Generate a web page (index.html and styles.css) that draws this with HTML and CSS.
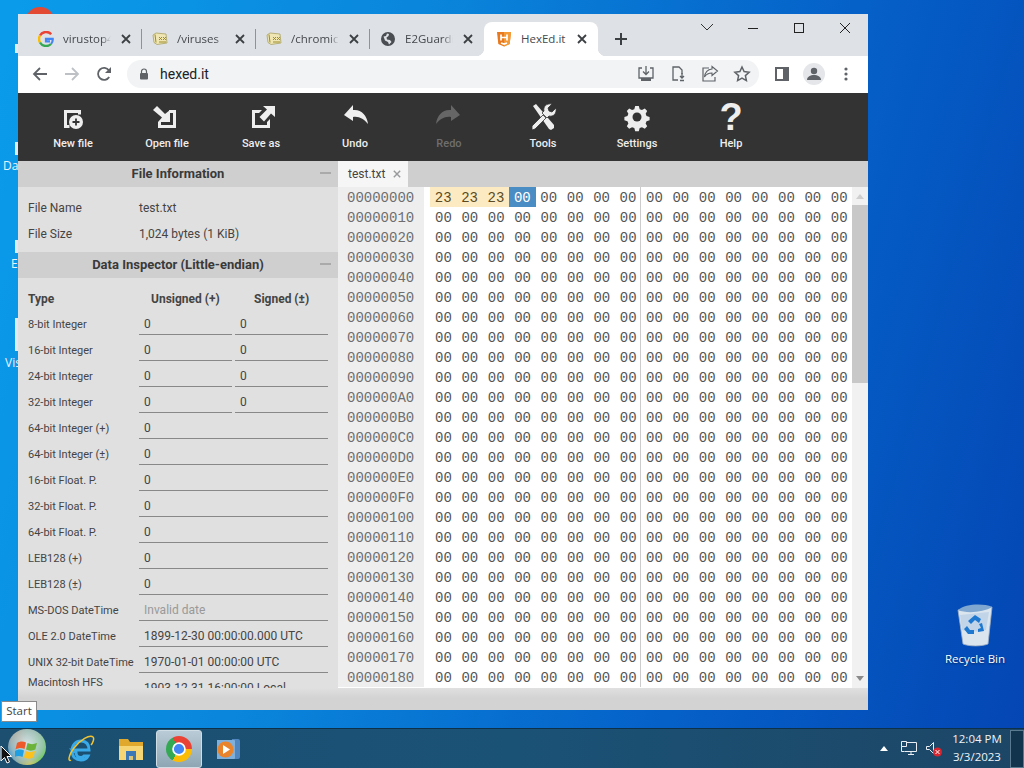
FILE: index.html
```html
<!DOCTYPE html>
<html lang="en">
<head>
<meta charset="utf-8">
<title>HexEd.it</title>
<link rel="stylesheet" href="styles.css">
</head>
<body>
<svg class="defs" width="0" height="0" aria-hidden="true">
  <symbol id="x" viewBox="0 0 10 10"><path d="M1 1l8 8M9 1l-8 8" fill="none" stroke="#3c4043" stroke-width="1.8"/></symbol>
  <symbol id="globe-fav" viewBox="0 0 16 16"><path d="M8 1a7 7 0 1 0 0 14A7 7 0 0 0 8 1zM3.500 5.500L6 5l1-2.500 2 .5-.5 2-2 1.500L7 8.500l3 .500 1.500 2L9 13.500 8 11 5 9.500z" fill="#4a4d52" fill-rule="evenodd"/></symbol>
  <symbol id="folder-fav" viewBox="0 0 16 16"><path d="M1 4l3-2 10 1 1 9-10 1.500-3-2z" fill="#efe6b4" stroke="#a9a262" stroke-width=".8"/><path d="M3 3.500l1 8M7 6l3 3M10 6L7 9M11 6l3 3M14 6l-3 3M7 11h7" fill="none" stroke="#9c8c2a" stroke-width="1"/></symbol>
</svg>

<main class="desktop">
  <div class="peek-icon peek-chrome"></div>
  <div class="peek-bit peek-bit-a"></div>
  <div class="peek-bit peek-bit-b"></div>
  <div class="peek-bit peek-bit-c"></div>
  <div class="peek-bit peek-bit-d"></div>
  <span class="peek-label peek-da">Da</span>
  <span class="peek-label peek-e">E</span>
  <span class="peek-label peek-vis">Vis</span>

  <div class="bin">
    <svg class="bin-icon" width="38" height="44" viewBox="0 0 38 44">
      <path d="M2 7l34-3-4 37c-6 2.500-19 2.500-25 0z" fill="#dbe5ee" stroke="#9fb0c2" stroke-width=".8"/>
      <path d="M2 7C9 1 27 0 36 4c-8 5-25 7-34 3z" fill="#7fa7d0"/>
      <path d="M4 12l29-3-3 18c-8 2-18 2-24 0z" fill="#b9cfe6" opacity=".75"/>
      <path d="M19 12l6 4-2 4-4-3-4 4-3-3zM26 20l2 8-6 1v-3l3-1-2-4zM11 23l3 4 4 0v4h-6l-4-5z" fill="#1f78cf"/>
    </svg>
    <span class="bin-label">Recycle Bin</span>
  </div>

  <section class="window">
    <header class="tabstrip">
      <div class="tab">
        <svg class="fav" width="16" height="16" viewBox="0 0 16 16">
          <path d="M13.200 3.200A7 7 0 0 0 2 4.500" fill="none" stroke="#ea4335" stroke-width="2.400"/>
          <path d="M2 4.500a7 7 0 0 0 0 7" fill="none" stroke="#fbbc05" stroke-width="2.400"/>
          <path d="M2 11.500a7 7 0 0 0 11 1.500" fill="none" stroke="#34a853" stroke-width="2.400"/>
          <path d="M13 13c1.200-1.200 1.900-3 1.700-5.200H8v2.500h4" fill="none" stroke="#4285f4" stroke-width="2.200"/>
        </svg>
        <span class="tab-title">virustop4</span>
        <svg class="tab-x" width="10" height="10"><use href="#x"/></svg>
      </div>
      <div class="tab">
        <svg class="fav" width="16" height="16"><use href="#folder-fav"/></svg>
        <span class="tab-title">/viruses</span>
        <svg class="tab-x" width="10" height="10"><use href="#x"/></svg>
      </div>
      <div class="tab">
        <svg class="fav" width="16" height="16"><use href="#folder-fav"/></svg>
        <span class="tab-title">/chromic</span>
        <svg class="tab-x" width="10" height="10"><use href="#x"/></svg>
      </div>
      <div class="tab tab-last">
        <svg class="fav" width="16" height="16"><use href="#globe-fav"/></svg>
        <span class="tab-title">E2Guardi</span>
        <svg class="tab-x" width="10" height="10"><use href="#x"/></svg>
      </div>
      <div class="tab tab-active">
        <svg class="fav" width="16" height="16" viewBox="0 0 16 16">
          <path d="M1 1h14l-1.300 12L8 15.500 2.300 13z" fill="#e8791f"/>
          <path d="M8 1h7l-1.300 12L8 15.500z" fill="#f39a37"/>
          <path d="M5 3.500v6M11 3.500v6M5 6.500h6M5 12l3 1 3-1" fill="none" stroke="#fff" stroke-width="1.700"/>
        </svg>
        <span class="tab-title">HexEd.it</span>
        <svg class="tab-x" width="10" height="10"><use href="#x"/></svg>
      </div>
      <svg class="newtab" width="14" height="14" viewBox="0 0 14 14"><path d="M7 1v12M1 7h12" stroke="#3c4043" stroke-width="2"/></svg>
      <div class="winctl">
        <svg class="winbtn" width="46" height="16" viewBox="0 0 46 16"><path d="M17 4l6 6 6-6" fill="none" stroke="#333" stroke-width="1"/></svg>
        <svg class="winbtn" width="46" height="16" viewBox="0 0 46 16"><path d="M18 8.500h10" stroke="#222" stroke-width="1"/></svg>
        <svg class="winbtn" width="46" height="16" viewBox="0 0 46 16"><rect x="18.500" y="3.500" width="9" height="9" fill="none" stroke="#222" stroke-width="1"/></svg>
        <svg class="winbtn" width="46" height="16" viewBox="0 0 46 16"><path d="M18 3l10 10M28 3L18 13" stroke="#222" stroke-width="1"/></svg>
      </div>
    </header>

    <nav class="navbar">
      <svg class="nav-ico" width="16" height="16" viewBox="0 0 16 16"><path d="M15 8H2M8 2L2 8l6 6" fill="none" stroke="#5f6368" stroke-width="1.800"/></svg>
      <svg class="nav-ico" width="16" height="16" viewBox="0 0 16 16"><path d="M1 8h13M8 2l6 6-6 6" fill="none" stroke="#bdc1c6" stroke-width="1.800"/></svg>
      <svg class="nav-ico" width="16" height="16" viewBox="0 0 16 16"><path d="M13.200 11A6 6 0 1 1 13 4.500" fill="none" stroke="#5f6368" stroke-width="1.800"/><path d="M15 1v6H9z" fill="#5f6368"/></svg>
      <div class="omnibox">
        <svg class="lock" width="10" height="12" viewBox="0 0 10 12"><path d="M2.500 5V3.500a2.500 2.500 0 0 1 5 0V5" fill="none" stroke="#5f6368" stroke-width="1.200"/><rect x="1" y="5" width="8" height="6.500" rx="1" fill="#5f6368"/></svg>
        <span class="url">hexed.it</span>
        <svg class="omni-ico" width="18" height="18" viewBox="0 0 18 18"><path d="M5 3H2v10h14V3h-3M9 1v8M6 6.500L9 9.500 12 6.500" fill="none" stroke="#5f6368" stroke-width="1.300"/><path d="M4 13h10v3H4z" fill="#5f6368"/></svg>
        <svg class="omni-ico" width="18" height="18" viewBox="0 0 18 18"><path d="M9 15H4V2h6l3 3v4" fill="none" stroke="#5f6368" stroke-width="1.300"/><path d="M13 8v5M11 11l2 2 2-2M11 15.500h4" fill="none" stroke="#5f6368" stroke-width="1.300"/></svg>
        <svg class="omni-ico" width="18" height="18" viewBox="0 0 18 18"><path d="M11 1.500l5.500 4.500L11 10.500V8C7 8 5 9.500 3.500 12 4 7.500 6.500 4.500 11 4z" fill="none" stroke="#5f6368" stroke-width="1.100"/><path d="M8 3H2v13h12v-4" fill="none" stroke="#5f6368" stroke-width="1.200"/></svg>
        <svg class="omni-ico" width="18" height="18" viewBox="0 0 18 18"><path d="M9 2l2.100 4.600 5 .6-3.700 3.400 1 5L9 13.100l-4.400 2.500 1-5L1.900 7.200l5-.6z" fill="none" stroke="#5f6368" stroke-width="1.500"/></svg>
      </div>
      <svg class="panel-ico" width="14" height="14" viewBox="0 0 14 14"><path d="M0 0h14v14H0z" fill="#5f6368"/><path d="M2 2h6v10H2z" fill="#fff"/></svg>
      <div class="avatar"><svg width="14" height="14" viewBox="0 0 14 14"><circle cx="7" cy="4" r="3.200" fill="#5f6368"/><path d="M0 13c0-3.500 3.500-5 7-5s7 1.500 7 5z" fill="#5f6368"/></svg></div>
      <svg class="menu-ico" width="4" height="14" viewBox="0 0 4 14"><circle cx="2" cy="2" r="1.600" fill="#5f6368"/><circle cx="2" cy="7" r="1.600" fill="#5f6368"/><circle cx="2" cy="12" r="1.600" fill="#5f6368"/></svg>
    </nav>

    <div class="toolbar">
      <div class="tool">
        <svg class="tool-ico" width="36" height="32" viewBox="0 0 36 32"><path d="M9 9h17v4.500h-3V12H12v12h2.500v3H9z" fill="#eee"/><circle cx="21" cy="21" r="7" fill="#eee"/><path d="M21 17.500v7M17.500 21h7" stroke="#333" stroke-width="1.800"/></svg>
        <span>New file</span>
      </div>
      <div class="tool">
        <svg class="tool-ico" width="36" height="32" viewBox="0 0 36 32"><path d="M4 9l4-4 8 8 5-4v12H9l4-4.500z" fill="#eee"/><path d="M20 9h7v18H9v-6h3v3h12V12h-4z" fill="#eee"/></svg>
        <span>Open file</span>
      </div>
      <div class="tool">
        <svg class="tool-ico" width="36" height="32" viewBox="0 0 36 32"><path d="M9 9h10l-3 3h-4v12h12v-3l3-3v9H9z" fill="#eee"/><path d="M32 5v11l-4-3.500-7 8-4.500-4.500 7.500-7.500L20 5z" fill="#eee"/></svg>
        <span>Save as</span>
      </div>
      <div class="tool">
        <svg class="tool-ico" width="36" height="32" viewBox="0 0 36 32"><path d="M7 14l9-10v5c8-1 14 5 15 14-4-5-9-8-15-7v4z" fill="#eee"/></svg>
        <span>Undo</span>
      </div>
      <div class="tool tool-off">
        <svg class="tool-ico" width="36" height="32" viewBox="0 0 36 32"><path d="M29 14l-9-10v5C12 8 6 14 5 23c4-5 9-8 15-7v4z" fill="#666"/></svg>
        <span>Redo</span>
      </div>
      <div class="tool">
        <svg class="tool-ico" width="36" height="32" viewBox="0 0 36 32"><path d="M8 5l3-2 18 21 0 3-3 2-2-1z" fill="#eee"/><path d="M7 25l11-11 3 3-11 11-3 1zM19 10c-1-4 2-8 8-7l-4 4 1 3 3 1 4-4c1 6-3 9-7 8l-2 2-5-5z" fill="#eee" stroke="#333" stroke-width=".8"/></svg>
        <span>Tools</span>
      </div>
      <div class="tool">
        <svg class="tool-ico" width="36" height="32" viewBox="0 0 36 32"><path d="M16 4h4l1 3.500 2.500 1 3.200-1.700 2.600 2.700-1.700 3.100 1 2.500 3.400 1v3.800l-3.400 1-1 2.500 1.700 3.100-2.600 2.700-3.200-1.700-2.500 1-1 3.500h-4l-1-3.500-2.500-1-3.200 1.700-2.600-2.700 1.700-3.100-1-2.500-3.400-1v-3.800l3.400-1 1-2.500-1.700-3.100 2.600-2.700 3.200 1.700 2.500-1z" fill="#eee" transform="translate(1.800 1.400) scale(.9)"/><circle cx="18" cy="16" r="4.500" fill="#333"/></svg>
        <span>Settings</span>
      </div>
      <div class="tool">
        <span class="help-mark">?</span>
        <span>Help</span>
      </div>
    </div>

    <div class="workspace">
      <aside class="sidebar">
        <h2 class="section-head">File Information<i class="collapse"></i></h2>
        <dl class="file-info">
          <div class="info-row"><dt>File Name</dt><dd>test.txt</dd></div>
          <div class="info-row"><dt>File Size</dt><dd>1,024 bytes (1 KiB)</dd></div>
        </dl>
        <h2 class="section-head">Data Inspector (Little-endian)<i class="collapse"></i></h2>
        <div class="inspector">
          <div class="ins-head"><span>Type</span><span>Unsigned (+)</span><span>Signed (±)</span></div>
          <div class="ins-row"><span class="ins-label">8-bit Integer</span><span class="field">0</span><span class="field">0</span></div>
          <div class="ins-row"><span class="ins-label">16-bit Integer</span><span class="field">0</span><span class="field">0</span></div>
          <div class="ins-row"><span class="ins-label">24-bit Integer</span><span class="field">0</span><span class="field">0</span></div>
          <div class="ins-row"><span class="ins-label">32-bit Integer</span><span class="field">0</span><span class="field">0</span></div>
          <div class="ins-row"><span class="ins-label">64-bit Integer (+)</span><span class="field wide">0</span></div>
          <div class="ins-row"><span class="ins-label">64-bit Integer (±)</span><span class="field wide">0</span></div>
          <div class="ins-row"><span class="ins-label">16-bit Float. P.</span><span class="field wide">0</span></div>
          <div class="ins-row"><span class="ins-label">32-bit Float. P.</span><span class="field wide">0</span></div>
          <div class="ins-row"><span class="ins-label">64-bit Float. P.</span><span class="field wide">0</span></div>
          <div class="ins-row"><span class="ins-label">LEB128 (+)</span><span class="field wide">0</span></div>
          <div class="ins-row"><span class="ins-label">LEB128 (±)</span><span class="field wide">0</span></div>
          <div class="ins-row"><span class="ins-label">MS-DOS DateTime</span><span class="field wide muted">Invalid date</span></div>
          <div class="ins-row"><span class="ins-label">OLE 2.0 DateTime</span><span class="field wide">1899-12-30 00:00:00.000 UTC</span></div>
          <div class="ins-row"><span class="ins-label">UNIX 32-bit DateTime</span><span class="field wide">1970-01-01 00:00:00 UTC</span></div>
          <div class="ins-row"><span class="ins-label">Macintosh HFS DateTime</span><span class="field wide">1903-12-31 16:00:00 Local</span></div>
        </div>
      </aside>

      <div class="editor">
        <div class="file-tabs">
          <div class="file-tab">test.txt<svg class="file-x" width="8" height="8"><use href="#x"/></svg></div>
        </div>
        <div class="hex-wrap">
          <div class="hex">
            <div class="hex-row"><span class="off">00000000</span><span class="grp grp-cells"><span class="cell mark">23</span><span class="cell mark">23</span><span class="cell mark">23</span><span class="cell sel">00</span><span class="cell">00</span><span class="cell">00</span><span class="cell">00</span><span class="cell">00</span></span><span class="grp">00 00 00 00 00 00 00 00</span></div>
            <div class="hex-row"><span class="off">00000010</span><span class="grp">00 00 00 00 00 00 00 00</span><span class="grp">00 00 00 00 00 00 00 00</span></div>
            <div class="hex-row"><span class="off">00000020</span><span class="grp">00 00 00 00 00 00 00 00</span><span class="grp">00 00 00 00 00 00 00 00</span></div>
            <div class="hex-row"><span class="off">00000030</span><span class="grp">00 00 00 00 00 00 00 00</span><span class="grp">00 00 00 00 00 00 00 00</span></div>
            <div class="hex-row"><span class="off">00000040</span><span class="grp">00 00 00 00 00 00 00 00</span><span class="grp">00 00 00 00 00 00 00 00</span></div>
            <div class="hex-row"><span class="off">00000050</span><span class="grp">00 00 00 00 00 00 00 00</span><span class="grp">00 00 00 00 00 00 00 00</span></div>
            <div class="hex-row"><span class="off">00000060</span><span class="grp">00 00 00 00 00 00 00 00</span><span class="grp">00 00 00 00 00 00 00 00</span></div>
            <div class="hex-row"><span class="off">00000070</span><span class="grp">00 00 00 00 00 00 00 00</span><span class="grp">00 00 00 00 00 00 00 00</span></div>
            <div class="hex-row"><span class="off">00000080</span><span class="grp">00 00 00 00 00 00 00 00</span><span class="grp">00 00 00 00 00 00 00 00</span></div>
            <div class="hex-row"><span class="off">00000090</span><span class="grp">00 00 00 00 00 00 00 00</span><span class="grp">00 00 00 00 00 00 00 00</span></div>
            <div class="hex-row"><span class="off">000000A0</span><span class="grp">00 00 00 00 00 00 00 00</span><span class="grp">00 00 00 00 00 00 00 00</span></div>
            <div class="hex-row"><span class="off">000000B0</span><span class="grp">00 00 00 00 00 00 00 00</span><span class="grp">00 00 00 00 00 00 00 00</span></div>
            <div class="hex-row"><span class="off">000000C0</span><span class="grp">00 00 00 00 00 00 00 00</span><span class="grp">00 00 00 00 00 00 00 00</span></div>
            <div class="hex-row"><span class="off">000000D0</span><span class="grp">00 00 00 00 00 00 00 00</span><span class="grp">00 00 00 00 00 00 00 00</span></div>
            <div class="hex-row"><span class="off">000000E0</span><span class="grp">00 00 00 00 00 00 00 00</span><span class="grp">00 00 00 00 00 00 00 00</span></div>
            <div class="hex-row"><span class="off">000000F0</span><span class="grp">00 00 00 00 00 00 00 00</span><span class="grp">00 00 00 00 00 00 00 00</span></div>
            <div class="hex-row"><span class="off">00000100</span><span class="grp">00 00 00 00 00 00 00 00</span><span class="grp">00 00 00 00 00 00 00 00</span></div>
            <div class="hex-row"><span class="off">00000110</span><span class="grp">00 00 00 00 00 00 00 00</span><span class="grp">00 00 00 00 00 00 00 00</span></div>
            <div class="hex-row"><span class="off">00000120</span><span class="grp">00 00 00 00 00 00 00 00</span><span class="grp">00 00 00 00 00 00 00 00</span></div>
            <div class="hex-row"><span class="off">00000130</span><span class="grp">00 00 00 00 00 00 00 00</span><span class="grp">00 00 00 00 00 00 00 00</span></div>
            <div class="hex-row"><span class="off">00000140</span><span class="grp">00 00 00 00 00 00 00 00</span><span class="grp">00 00 00 00 00 00 00 00</span></div>
            <div class="hex-row"><span class="off">00000150</span><span class="grp">00 00 00 00 00 00 00 00</span><span class="grp">00 00 00 00 00 00 00 00</span></div>
            <div class="hex-row"><span class="off">00000160</span><span class="grp">00 00 00 00 00 00 00 00</span><span class="grp">00 00 00 00 00 00 00 00</span></div>
            <div class="hex-row"><span class="off">00000170</span><span class="grp">00 00 00 00 00 00 00 00</span><span class="grp">00 00 00 00 00 00 00 00</span></div>
            <div class="hex-row"><span class="off">00000180</span><span class="grp">00 00 00 00 00 00 00 00</span><span class="grp">00 00 00 00 00 00 00 00</span></div>
          </div>
          <div class="scrollbar">
            <i class="arrow-up"></i>
            <div class="thumb"></div>
            <i class="arrow-down"></i>
          </div>
        </div>
      </div>
    </div>
    <div class="statusbar"></div>
  </section>

  <div class="tooltip">Start</div>
</main>

<footer class="taskbar">
  <div class="orb">
    <svg width="24" height="24" viewBox="0 0 24 24">
      <path d="M2 5c3-2 6-2 9-.500L9.500 11c-3-1.500-6-1.500-9 .5z" fill="#ef5a2a"/>
      <path d="M12.500 5c3 1.500 6 1.500 9.500 0l-1.700 6.500c-3 1.500-6 1.500-9.300 0z" fill="#6cb33a"/>
      <path d="M0 13c3-2 6-2 9-.5L7.500 19c-3-1.500-6-1.500-9 .5z" fill="#1fa0e3"/>
      <path d="M10.500 13c3 1.500 6 1.500 9.500 0L18.500 19.500c-3 1.500-6 1.500-9.500 0z" fill="#fcc11b"/>
    </svg>
  </div>
  <div class="task-btn">
    <svg width="30" height="30" viewBox="0 0 30 30">
      <path d="M7 16h16c0-6-3-9-8-9s-9 4-9 10 4 9 9 9c4 0 6-2 7-4h-4c-1 1-2 1.500-3 1.500-3 0-5-2-5-5z" fill="none" stroke="#39a9e8" stroke-width="3"/>
      <path d="M5 26C2 28 2 22 8 14 14 6 24 0 27 3c1.500 1.500 0 6-2 8" fill="none" stroke="#f4c430" stroke-width="1.500"/>
    </svg>
  </div>
  <div class="task-btn">
    <svg width="26" height="24" viewBox="0 0 26 24">
      <path d="M1 2h9l2 3h13v18H1z" fill="#e0a92e"/>
      <path d="M1 9h24v14H1z" fill="#f6d575"/>
      <path d="M8 14h10v9H8z" fill="#3b78b5"/>
      <path d="M11 19h4v4h-4z" fill="#d9c27a"/>
    </svg>
  </div>
  <div class="task-btn task-active"><div class="chrome-logo"><span class="chrome-dot"></span></div></div>
  <div class="task-btn task-small">
    <svg width="26" height="24" viewBox="0 0 26 24">
      <path d="M17 2h6a2 2 0 0 1 2 2v16a2 2 0 0 1-2 2h-6z" fill="#4f86c0"/>
      <path d="M2 3h17a1 1 0 0 1 1 1v17a1 1 0 0 1-1 1H2z" fill="#7fb0dc"/>
      <circle cx="10.500" cy="12.500" r="8" fill="#e9842c"/>
      <path d="M8 8l7 4.500L8 17z" fill="#fff"/>
    </svg>
  </div>
  <div class="tray">
    <i class="tray-up"></i>
    <svg class="tray-net" width="16" height="15" viewBox="0 0 16 15"><path d="M3.500 1.500h12v9h-12M7 13.500h6M10 10.500v3" fill="none" stroke="#e8eef3" stroke-width="1"/><path d="M.5.500h5v5h-5zM.5 5.500v5h3" fill="#1c4a68" stroke="#e8eef3" stroke-width="1"/></svg>
    <svg class="tray-snd" width="18" height="16" viewBox="0 0 18 16"><path d="M1.500 5.500h3l4-4v11l-4-4h-3z" fill="none" stroke="#e8eef3" stroke-width="1"/><circle cx="12.500" cy="11" r="4.500" fill="#d8252f"/><path d="M10.500 9l4 4M14.500 9l-4 4" stroke="#fff" stroke-width="1"/></svg>
    <div class="clock"><span>12:04 PM</span><span>3/3/2023</span></div>
    <div class="show-desktop"></div>
  </div>
</footer>

<svg class="cursor" width="12" height="20" viewBox="0 0 12 20"><path d="M1 1v15l3.500-3.500L7 18l2.500-1-2.500-5.500h4.500z" fill="#111" stroke="#fff" stroke-width="1"/></svg>
</body>
</html>
```

FILE: styles.css
```css
* { box-sizing: border-box; }
html, body { margin: 0; height: 100%; }
body {
  width: 1024px;
  height: 768px;
  overflow: hidden;
  display: flex;
  flex-direction: column;
  font-family: "Roboto", "Liberation Sans", sans-serif;
  position: relative;
}
.defs { position: absolute; }

/* desktop */
.desktop {
  position: relative;
  flex: 1;
  background: linear-gradient(105deg, #0a9ceb 0%, #0a86dc 35%, #0561c8 70%, #0446b4 100%);
}
.peek-chrome {
  position: absolute; left: 25px; top: 7px; width: 30px; height: 30px; border-radius: 50%;
  background: #e24a33;
}
.peek-bit { position: absolute; left: 15px; width: 3px; background: #dfeaf5; }
.peek-bit-a { top: 44px; height: 9px; }
.peek-bit-b { top: 142px; height: 13px; }
.peek-bit-c { top: 240px; height: 13px; }
.peek-bit-d { top: 318px; height: 33px; }
.peek-label {
  position: absolute; color: #e8f4ff; font: 12px "Open Sans", sans-serif;
}
.peek-da { left: 3px; top: 157px; }
.peek-e { left: 11px; top: 255px; }
.peek-vis { left: 5px; top: 354px; }

.bin {
  position: absolute; left: 940px; top: 603px; width: 70px;
  display: flex; flex-direction: column; align-items: center; gap: 4px;
}
.bin-label { color: #fff; font: 11.5px "Open Sans", sans-serif; white-space: nowrap; text-shadow: 0 1px 2px rgba(0,0,0,.5); }

.tooltip {
  position: absolute; left: 1px; top: 701px; width: 36px; height: 21px;
  background: #fff; border: 1px solid #8a8a8a;
  color: #444; font: 11.5px "Open Sans", sans-serif; text-align: center; line-height: 18px;
}

/* window */
.window {
  position: absolute; left: 18px; top: 14px; width: 850px; height: 696px;
  display: flex; flex-direction: column; background: #d3d3d3;
}
.tabstrip {
  height: 42px; background: #dee1e6; flex: none;
  display: flex; align-items: flex-end; padding-left: 10px; position: relative;
}
.tab {
  width: 114px; height: 34px; display: flex; align-items: center;
  padding: 0 11px 0 10px; position: relative;
}
.tab::after {
  content: ""; position: absolute; right: 0; top: 7px; width: 1px; height: 20px; background: #8f9296;
}
.tab-last::after, .tab-active::after { content: none; }
.tab-active {
  background: #fff; border-radius: 8px 8px 0 0; padding-left: 12px; padding-right: 11px;
}
.tab-active::before, .tab-active::after {
  content: ""; position: absolute; bottom: 0; top: auto; width: 8px; height: 8px; background: transparent;
}
.tab-active::before { left: -8px; background: radial-gradient(circle at 0 0, #dee1e6 8px, #fff 8.5px); }
.tab-active::after { content: ""; right: -8px; background: radial-gradient(circle at 100% 0, #dee1e6 8px, #fff 8.5px); }
.tab-title {
  flex: 1; min-width: 0; margin: 0 10px 1px 9px; overflow: hidden; white-space: nowrap;
  font: 11.5px "Open Sans", sans-serif; color: #45484c;
  -webkit-mask-image: linear-gradient(90deg, #000 80%, transparent 100%);
  mask-image: linear-gradient(90deg, #000 80%, transparent 100%);
}
.tab-active .tab-title { -webkit-mask-image: none; mask-image: none; }
.fav, .tab-x { flex: none; }
.newtab { margin: 0 0 10px 16px; }
.winctl { margin-left: 56px; align-self: flex-start; padding-top: 6px; display: flex; }

.navbar {
  height: 37px; background: #fff; display: flex; align-items: flex-start; padding-left: 14px; flex: none;
}
.nav-ico { margin: 10px 16px 0 0; flex: none; }
.omnibox {
  width: 632px; height: 28px; margin: 4px 0 0 -1px; background: #f1f3f4; border-radius: 14px;
  display: flex; align-items: center; padding-left: 12px;
}
.lock { flex: none; }
.url { flex: 1; margin-left: 11px; font: 14px "Roboto", sans-serif; color: #202124; }
.omni-ico { margin-right: 14px; flex: none; }
.omni-ico:last-child { margin-right: 8px; }
.panel-ico { margin: 11px 0 0 16px; flex: none; }
.avatar {
  width: 22px; height: 22px; border-radius: 50%; background: #e4e6ea; flex: none;
  margin: 7px 0 0 14px; display: flex; align-items: center; justify-content: center;
}
.menu-ico { margin: 11px 0 0 19px; flex: none; }

/* app toolbar */
.toolbar {
  height: 68px; background: #333; display: flex; padding-left: 8px; flex: none;
}
.tool {
  width: 94px; display: flex; flex-direction: column; align-items: center;
  color: #eee; font-size: 11px; font-weight: 500; line-height: 14px; padding-top: 8px;
}
.tool-ico { height: 32px; flex: none; margin-bottom: 4px; }
.tool-off { color: #6e6e6e; }
.help-mark {
  height: 32px; margin-bottom: 4px; font: 700 38px/32px "Liberation Sans", sans-serif; color: #eee;
}

/* workspace */
.workspace { height: 527px; display: flex; background: #e0e0e0; flex: none; }
.sidebar { width: 320px; height: 527px; overflow: hidden; flex: none; }
.section-head {
  position: relative; margin: 0; height: 26px; background: #cfcfcf;
  font-size: 13px; font-weight: 700; line-height: 25px; text-align: center; color: #3a3a3a;
}
.collapse { position: absolute; right: 7px; top: 11px; width: 11px; height: 2px; background: #aaa; }
.file-info { margin: 0; padding: 7px 0 6px 10px; }
.info-row { height: 26px; padding-top: 2px; display: flex; align-items: center; font-size: 12px; color: #444; }
.info-row dt { width: 111px; }
.info-row dd { margin: 0; }
.inspector { padding: 7px 10px 0; }
.ins-head { height: 26px; padding-top: 2px; display: grid; grid-template-columns: 111px 96px 93px; align-items: center; font-size: 12px; font-weight: 700; color: #444; }
.ins-head span:nth-child(2) { padding-left: 12px; }
.ins-head span:nth-child(3) { padding-left: 19px; white-space: nowrap; }
.ins-row { height: 26px; display: grid; grid-template-columns: 108px 93px 93px; column-gap: 3px; align-items: start; }
.ins-label { font-size: 11px; line-height: 13px; color: #444; padding-top: 7px; width: 108px; }
.field {
  height: 24px; border-bottom: 1px solid #888; padding-left: 5px;
  font-size: 12px; line-height: 26px; color: #444; white-space: nowrap; overflow: hidden;
}
.wide { grid-column: 2 / 4; }
.muted { color: #999; }
.ins-row:last-child .ins-label { padding-top: 1px; }
.ins-row:nth-last-child(2) .ins-label { white-space: nowrap; }

.editor { flex: 1; display: flex; flex-direction: column; }
.file-tabs { height: 26px; background: #cfcfcf; flex: none; }
.file-tab {
  width: 70px; height: 26px; background: #f6f6f6; font-size: 12px; color: #444;
  display: flex; align-items: center; padding-left: 10px; gap: 8px;
}
.file-x { opacity: .5; }
.hex-wrap { height: 501px; display: flex; background: #fff; }
.hex { width: 514px; font: 14px/22px "Liberation Mono", monospace; color: #555; }
.hex-row { height: 20px; display: flex; white-space: pre; }
.off { width: 86px; height: 20px; flex: none; background: #eee; color: #6e6e6e; padding-left: 9px; }
.grp { width: 211px; height: 20px; flex: none; padding-left: 5px; word-spacing: 1.2px; }
.grp + .grp { border-left: 1px solid #ccc; margin-left: -1px; width: 212px; }
.hex-row .off + .grp { margin-left: 6px; }
.grp-cells { display: flex; padding-left: 0; }
.cell { width: 26.4px; height: 20px; text-align: center; flex: none; }
.mark { background: #fcebc2; color: #5b4a22; }
.sel { background: #4a8cc4; color: #fff; }
.scrollbar { width: 16px; background: #f1f1f1; position: relative; display: flex; flex-direction: column; }
.thumb { height: 178px; margin-top: 18px; background: #c8c8c8; }
.arrow-up, .arrow-down { position: absolute; left: 4px; border-left: 4px solid transparent; border-right: 4px solid transparent; }
.arrow-up { top: 7px; border-bottom: 5px solid #cfcfcf; }
.arrow-down { bottom: 7px; border-top: 5px solid #8a8a8a; }
.statusbar { height: 22px; background: linear-gradient(#e0e0e0 0, #d3d3d3 10px); }

/* taskbar */
.taskbar {
  height: 40px; flex: none; display: flex; align-items: center; padding-left: 8px;
  background: linear-gradient(90deg, #1c4f70, #1a5276 50%, #1d4666);
  border-top: 1px solid #0d3148;
}
.orb {
  width: 38px; height: 36px; border-radius: 50%; flex: none; align-self: flex-start;
  background:
    radial-gradient(circle at 50% 40%, rgba(215,230,232,.95) 0, rgba(165,195,195,.8) 55%, rgba(120,160,150,0) 82%),
    conic-gradient(#7a9a70 0 20deg, #5fce3f 60deg 130deg, #d8c84a 170deg, #7aa0a8 220deg, #2a8fd8 250deg, #d06a40 320deg, #7a9a70 360deg);
  display: flex; align-items: center; justify-content: center; padding-top: 6px;
}
.task-btn { width: 47px; height: 38px; margin-left: 3px; display: flex; align-items: center; justify-content: center; flex: none; }
.orb + .task-btn { margin-left: 11px; }
.task-active {
  width: 46px; margin-left: 2px;
  background: linear-gradient(#b9cbd6, #8ea6b4);
  border: 1px solid #d0dde4; border-radius: 3px;
}
.task-small { width: 46px; }
.chrome-logo {
  width: 26px; height: 26px; border-radius: 50%; display: flex; align-items: center; justify-content: center;
  background: conic-gradient(from -30deg, #ea4335 0 120deg, #fbbc05 120deg 240deg, #34a853 240deg 360deg);
}
.chrome-dot { width: 12px; height: 12px; border-radius: 50%; background: #4285f4; border: 2px solid #fff; box-sizing: content-box; transform: scale(.85); }
.tray { margin-left: auto; display: flex; align-items: center; height: 100%; }
.tray-up { border-left: 4px solid transparent; border-right: 4px solid transparent; border-bottom: 5px solid #fff; margin-right: 13px; }
.tray-net { margin-right: 8px; }
.tray-snd { margin-right: 2px; }
.clock { width: 64px; padding-bottom: 2px; display: flex; flex-direction: column; align-items: center; color: #eef4f8; font: 11.5px/18px "Open Sans", sans-serif; margin-right: 1px; }
.show-desktop { width: 14px; height: 38px; background: #12344c; border: 1px solid #5a7a90; }
.cursor { position: absolute; left: 0; top: 745px; }
```
